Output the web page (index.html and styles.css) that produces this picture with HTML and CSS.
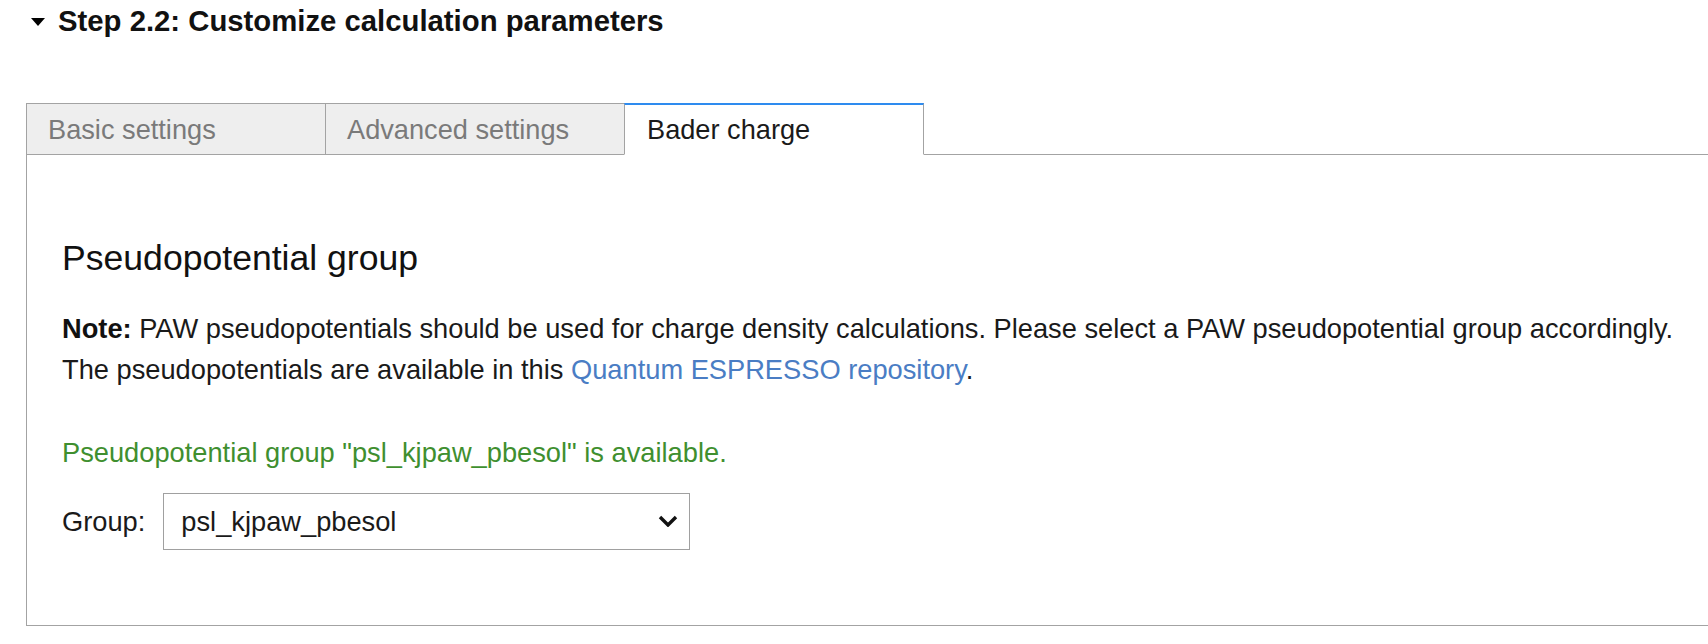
FILE: index.html
```html
<!DOCTYPE html>
<html lang="en">
<head>
<meta charset="utf-8">
<title>Step 2.2: Customize calculation parameters</title>
<link rel="stylesheet" href="styles.css">
</head>
<body>
<div class="page">
  <h2 class="step-title">
    <svg class="caret" viewBox="0 0 14 8" aria-hidden="true"><polygon points="0,0 14,0 7,8" fill="#000"/></svg>
    <span>Step 2.2: Customize calculation parameters</span>
  </h2>

  <div class="tabs">
    <div class="tab">Basic settings</div>
    <div class="tab">Advanced settings</div>
    <div class="tab active">Bader charge</div>
    <div class="tabs-fill"></div>
  </div>

  <div class="panel">
    <h3 class="group-title">Pseudopotential group</h3>
    <p class="note"><b>Note:</b> PAW pseudopotentials should be used for charge density calculations. Please select a PAW pseudopotential group accordingly. The pseudopotentials are available in this <a class="link" href="#">Quantum ESPRESSO repository</a>.</p>
    <p class="status">Pseudopotential group "psl_kjpaw_pbesol" is available.</p>
    <div class="group-row">
      <label class="group-label" for="grp">Group:</label>
      <div class="select-wrap">
        <select id="grp" class="select">
          <option>psl_kjpaw_pbesol</option>
        </select>
        <svg class="chevron" viewBox="0 0 20 12" aria-hidden="true"><polyline points="2,2 10,10 18,2" fill="none" stroke="#111" stroke-width="3.4"/></svg>
      </div>
    </div>
  </div>
</div>
</body>
</html>
```

FILE: styles.css
```css
* { box-sizing: border-box; }

html, body {
  margin: 0;
  overflow: hidden;
}

body {
  font-family: "Liberation Sans", Arial, sans-serif;
  color: #1a1a1a;
  background: #fff;
}

.page {
  width: 1760px;
}

.step-title {
  display: flex;
  align-items: center;
  gap: 13px;
  height: 40px;
  margin: 0;
  padding: 2px 0 0 31px;
  font-size: 29.3px;
  font-weight: bold;
  line-height: 38px;
  color: #111;
}

.caret {
  width: 14px;
  height: 8px;
  margin-top: 2px;
}

.tabs {
  display: flex;
  height: 52px;
  margin: 63px 0 0 26px;
}

.tab {
  display: flex;
  align-items: center;
  width: 300px;
  height: 52px;
  padding: 2px 0 0 21px;
  border: 1px solid #a3a3a3;
  background: #eeeeee;
  color: #7a7a7a;
  font-size: 27.2px;
}

.tab + .tab {
  margin-left: -1px;
}

.tab.active {
  background: #fff;
  color: #1a1a1a;
  border-top: 2px solid #2e8bef;
  border-bottom: 1px solid #fff;
  padding: 1px 0 0 22px;
}

.tabs-fill {
  flex: 1;
  border-bottom: 1px solid #a3a3a3;
}

.panel {
  height: 471px;
  margin-left: 26px;
  padding: 81px 35px 0 35px;
  border: 1px solid #a3a3a3;
  border-top: none;
}

.group-title {
  margin: 0;
  font-size: 35.6px;
  font-weight: normal;
  line-height: 44px;
  color: #111;
}

.note {
  max-width: 1640px;
  margin: 28px 0 0;
  font-size: 27.25px;
  line-height: 41px;
}

.note b {
  color: #111;
}

.link {
  color: #4a7dc4;
  text-decoration: none;
}

.status {
  margin: 42px 0 0;
  font-size: 27.25px;
  line-height: 41px;
  color: #3f8f2f;
}

.group-row {
  display: flex;
  align-items: center;
  gap: 18px;
  margin-top: 20px;
  font-size: 27.25px;
}

.select-wrap {
  position: relative;
  width: 527px;
  height: 57px;
}

.select {
  appearance: none;
  -webkit-appearance: none;
  width: 100%;
  height: 100%;
  padding: 0 40px 0 17px;
  border: 1px solid #a0a0a0;
  border-radius: 0;
  background: #fff;
  color: #1a1a1a;
  font: inherit;
}

.chevron {
  position: absolute;
  right: 12px;
  top: 22px;
  width: 20px;
  height: 12px;
  pointer-events: none;
}
```
